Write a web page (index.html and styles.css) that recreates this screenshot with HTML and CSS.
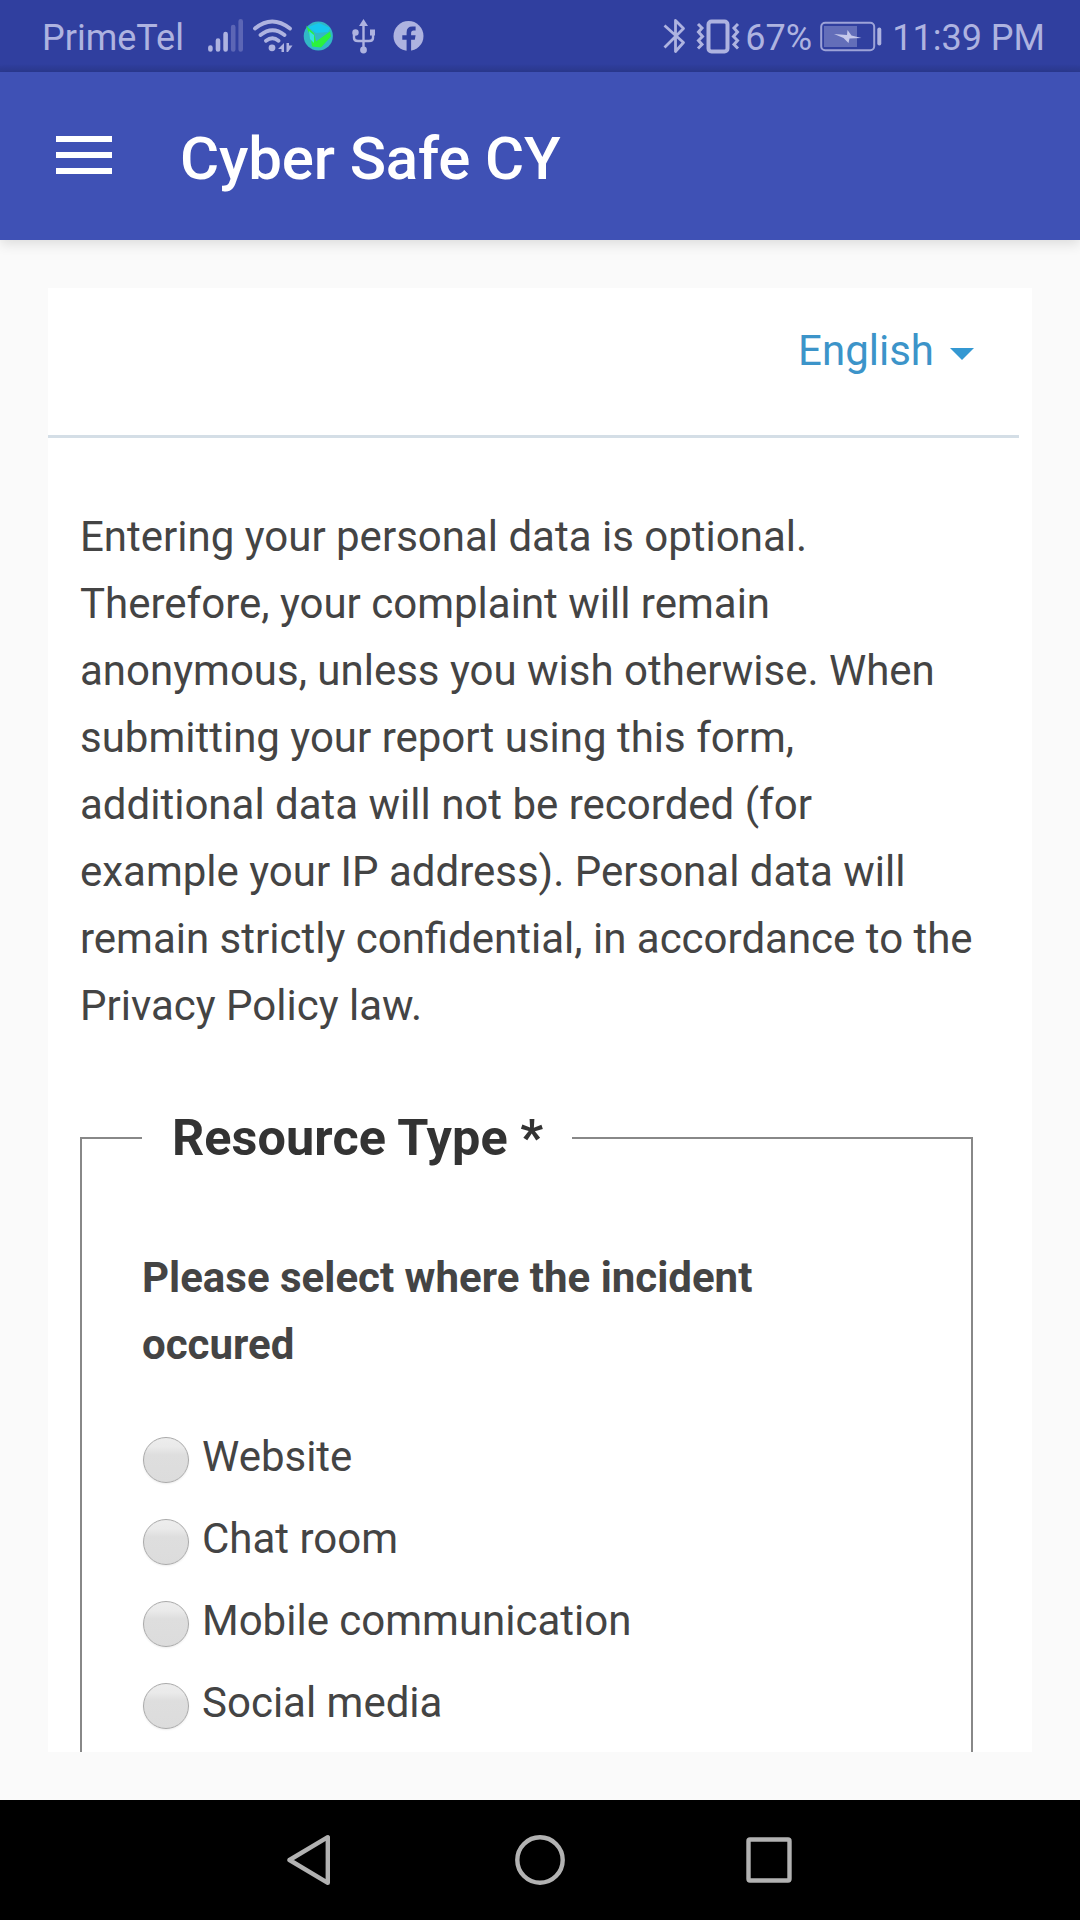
FILE: index.html
```html
<!DOCTYPE html>
<html lang="en">
<head>
<meta charset="utf-8">
<title>Cyber Safe CY</title>
<link rel="stylesheet" href="styles.css">
</head>
<body>
<div class="status-bar">
  <div class="status-left">
    <span class="carrier">PrimeTel</span>
    <svg class="notifications" width="226" height="44" viewBox="202 14 226 44">
      <g stroke="#aeb3e0" stroke-width="4.6" stroke-linecap="round" fill="none">
        <path d="M210.4 47.5v2M218 40.5v9M225.600 34v15.500"/>
        <path d="M233.200 27v22.500M240.700 21.200v28.300" stroke="#5c66b5"/>
      </g>
      <g stroke="#aeb3e0" stroke-width="3.800" stroke-linecap="round" fill="none">
        <path d="M255 28.500q17-14 35 0M260.500 35q12-9.500 24 0M266 40.800q6.500-5 12.500 0"/>
      </g>
      <circle cx="272" cy="47.800" r="3.400" fill="#aeb3e0"/>
      <path d="M284 43v9h-2.500v-3h-3.500zM286.500 43v9h1.500l4.500-6.500h-3.500v-2.500z" fill="#aeb3e0"/>
      <circle cx="318.300" cy="36" r="14.600" fill="#31b8c6"/>
      <path d="M308 27l11-4 11 5-2 4-12 1z" fill="#16c8ef"/>
      <path d="M306 25.500l8 8 2 8 14-10 1 5-10 11-9-1-1-8z" fill="#2bf23b"/>
      <path d="M309 31l5 4v8l-4-4z" fill="#35e3e0"/>
      <g stroke="#aeb3e0" stroke-width="2.400" fill="none">
        <path d="M363.500 23v27M354 33v5q0 3 4 3h5.500M373 33v5q0 3-4 3h-5.500"/>
      </g>
      <path d="M363.500 19l4.500 7h-9zM370 29.500h5v6h-5z" fill="#aeb3e0"/>
      <circle cx="355.500" cy="32.500" r="3.200" fill="#aeb3e0"/>
      <circle cx="363.500" cy="50" r="3.400" fill="#aeb3e0"/>
      <circle cx="408.500" cy="36" r="15" fill="#aeb3e0"/>
      <path d="M406.600 51V39.800h-4.300v-4.600h4.300v-2.800q0-5.800 5.800-5.800h3.200v4h-2q-2.500 0-2.500 2.500v2.100h4.500l-.8 4.600h-3.700V51z" fill="#303f9f"/>
    </svg>
  </div>
  <div class="status-right">
    <svg width="80" height="44" viewBox="660 14 80 44" fill="none" stroke="#aeb3e0">
      <path stroke-width="2.800" stroke-linejoin="round" d="M664.500 25.500l19 17-8 9v-31l8 8-19 19"/>
      <rect x="708.500" y="21.500" width="19" height="30" rx="3" stroke-width="4"/>
      <path stroke-width="3" d="M698 24l4 4-3.500 4 4 4.500-4 4 3.500 4-4 4M738 24l-4 4 3.500 4-4 4.500 4 4-3.500 4 4 4"/>
    </svg>
    <span class="percent">67%</span>
    <svg class="battery" width="62" height="32" viewBox="820 20 62 32">
      <rect x="821.200" y="22.800" width="53" height="27.500" rx="4" fill="none" stroke="#9da3d8" stroke-width="2"/>
      <path fill="#636eb9" d="M824 26h33v21h-33z"/>
      <path fill="#c5c8eb" d="M834 34l13 1 .5-5 4 5.500 10 2.500-12 .5-1 4.500-5-5z"/>
      <rect x="877.300" y="27.500" width="4" height="18" rx="2" fill="#aeb3e0"/>
    </svg>
    <span class="clock">11:39 PM</span>
  </div>
</div>
<header class="app-bar">
  <div class="menu"><i></i><i></i><i></i></div>
  <h1 class="title">Cyber Safe CY</h1>
</header>
<main class="content">
  <div class="card">
    <div class="language"><span>English</span><i class="caret"></i></div>
    <div class="form">
      <p class="intro">Entering your personal data is optional.<br>Therefore, your complaint will remain<br>anonymous, unless you wish otherwise. When<br>submitting your report using this form,<br>additional data will not be recorded (for<br>example your IP address). Personal data will<br>remain strictly confidential, in accordance to the<br>Privacy Policy law.</p>
      <fieldset class="resource">
        <legend>Resource Type *</legend>
        <p class="question">Please select where the incident<br>occured</p>
        <label class="option"><input type="radio" name="place"><span>Website</span></label>
        <label class="option"><input type="radio" name="place"><span>Chat room</span></label>
        <label class="option"><input type="radio" name="place"><span>Mobile communication</span></label>
        <label class="option"><input type="radio" name="place"><span>Social media</span></label>
      </fieldset>
    </div>
  </div>
</main>
<nav class="nav-bar">
  <svg width="506" height="52" viewBox="287 1834 506 52" fill="none" stroke="#b2b2b2" stroke-width="4.400" stroke-linejoin="round">
    <path d="M289.500 1860l38.300-22.800v45.600z"/>
    <circle cx="540" cy="1860" r="22.700"/>
    <rect x="748.500" y="1839.500" width="41" height="41" rx="1.500"/>
  </svg>
</nav>
</body>
</html>
```
FILE: styles.css
```css
* { box-sizing: border-box; }

body {
  margin: 0;
  width: 1080px;
  height: 1920px;
  overflow: hidden;
  display: flex;
  flex-direction: column;
  background: #fafafa;
  color: #444;
  font-family: Roboto, "Liberation Sans", sans-serif;
}

svg { display: block; flex: none; }

.status-bar {
  flex: none;
  height: 72px;
  padding: 0 35px 0 42px;
  display: flex;
  justify-content: space-between;
  background: linear-gradient(#303f9f 64px, #2b398f);
  color: #aeb3e0;
  font-size: 36px;
  line-height: 72px;
  white-space: nowrap;
}

.status-left, .status-right { display: flex; align-items: center; height: 72px; }
.carrier, .percent, .clock { padding-top: 3px; }
.carrier { width: 160px; }
.percent { width: 75px; margin-left: 5px; }
.battery { margin-right: 10px; }

.app-bar {
  flex: none;
  height: 168px;
  padding-left: 56px;
  display: flex;
  align-items: center;
  background: #3f51b5;
  box-shadow: 0 4px 12px rgba(0, 0, 0, .12);
}

.menu { width: 56px; height: 38px; margin-bottom: 2px; display: flex; flex-direction: column; justify-content: space-between; }
.menu i { height: 6px; background: #fff; }

.title {
  margin: 6px 0 0 68px;
  color: #fff;
  font-size: 60px;
  font-weight: 500;
  letter-spacing: -.15px;
  line-height: 72px;
}

.content { flex: none; height: 1560px; padding: 48px; }
.card { height: 1464px; overflow: hidden; background: #fff; font-size: 42px; line-height: 67px; }

.language {
  width: 971px;
  height: 150px;
  padding: 29px 45px 0 0;
  display: flex;
  justify-content: flex-end;
  border-bottom: 3px solid #d4dee6;
  color: #3c94c9;
}
.caret {
  margin: 31px 0 0 16px;
  width: 24px;
  height: 12px;
  background: #3498d2;
  clip-path: polygon(0 0, 100% 0, 50% 100%);
}

.form { width: 925px; padding: 65px 0 0 32px; }
.intro { margin: 0; white-space: nowrap; }

.resource {
  margin: 65px 0 0;
  height: 900px;
  padding: 0 0 0 60px;
  border: 2px solid #888;
}
.resource legend {
  padding: 0 29px 0 30px;
  color: #333;
  font-size: 50.400px;
  font-weight: 700;
  letter-spacing: .06px;
  line-height: 67px;
}

.question { margin: 73px 0 45px; font-weight: 700; }
.option { height: 82px; display: flex; align-items: flex-start; }
.option input {
  appearance: none;
  width: 46px;
  height: 46px;
  margin: 14px 13px 0 1px;
  border: 1px solid #aaa;
  border-radius: 50%;
  background: linear-gradient(#ededed, #eaeaea 20%, #dedede 38%, #dcdcdc);
  box-shadow: 0 1px 2px rgba(0, 0, 0, .08);
}

.nav-bar { flex: none; height: 120px; background: #000; display: flex; align-items: center; justify-content: center; }
```
